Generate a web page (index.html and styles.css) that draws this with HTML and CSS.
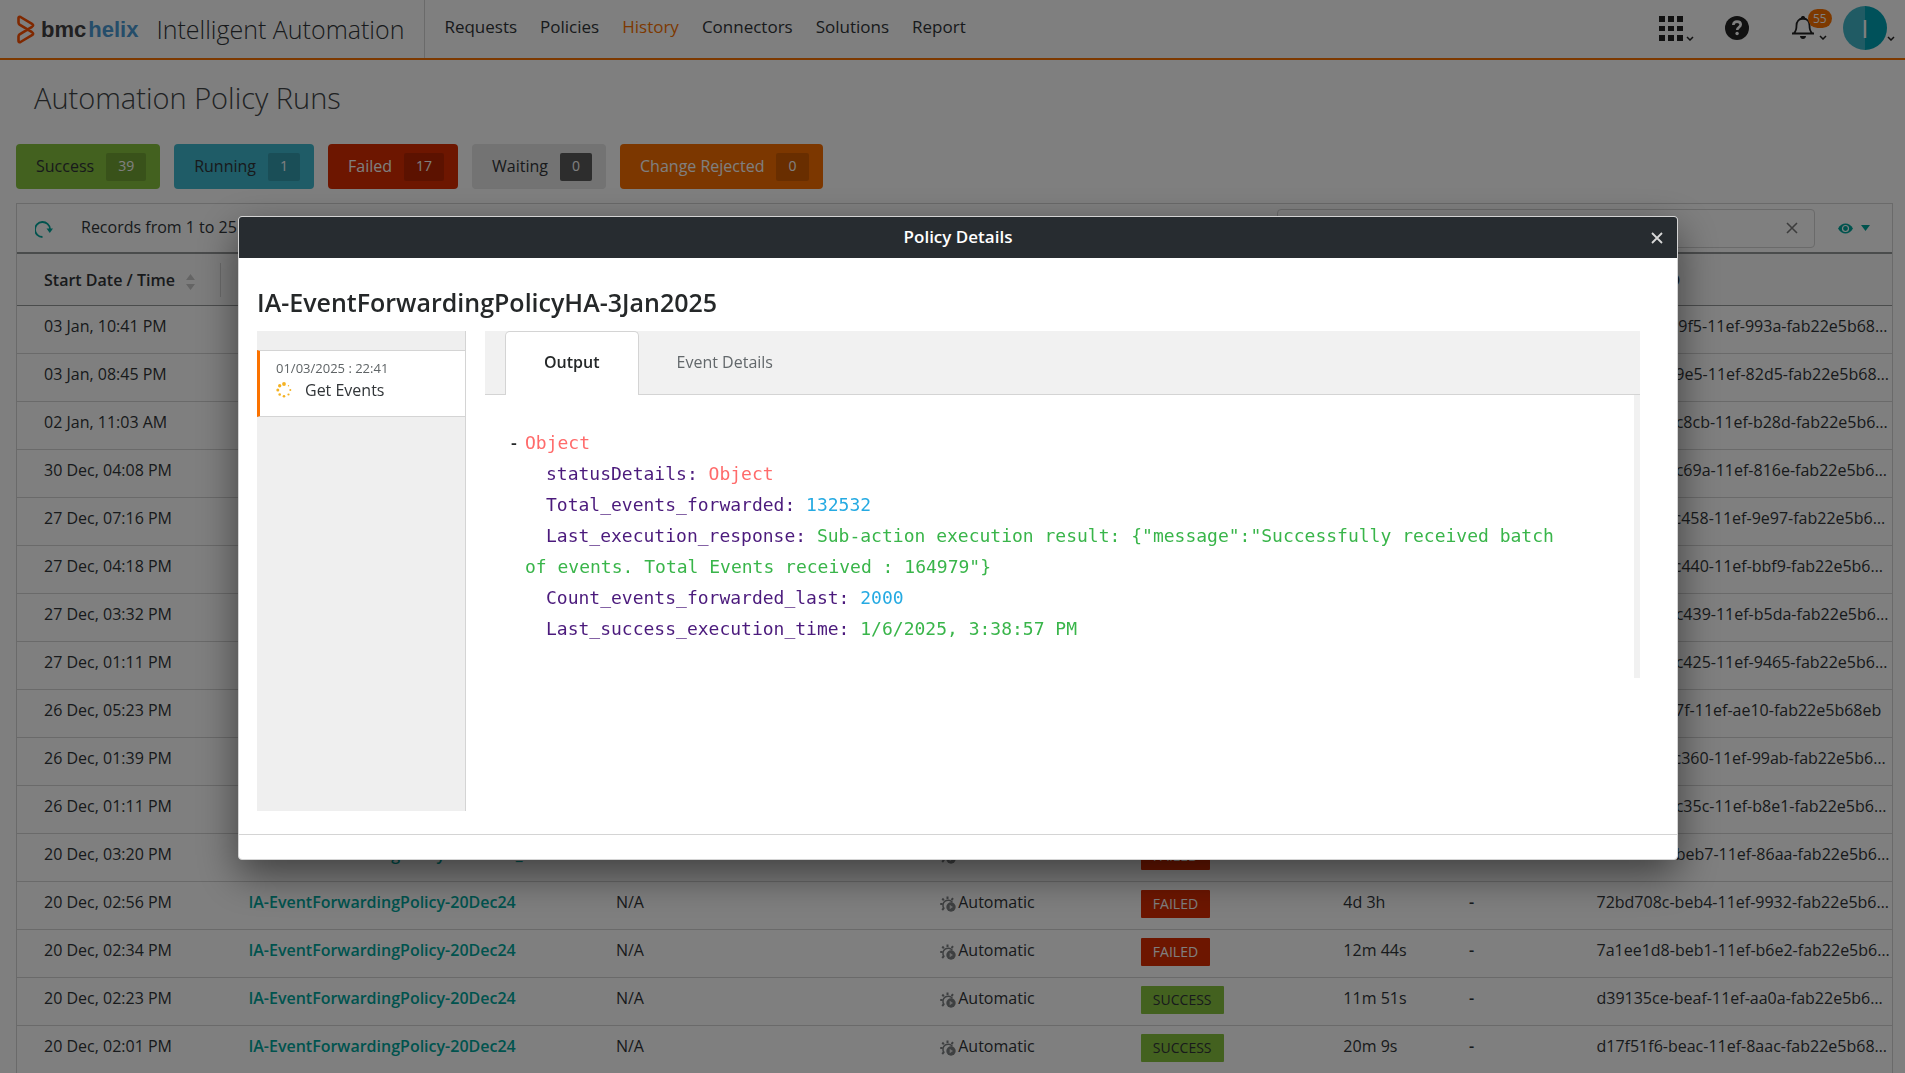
FILE: index.html
```html
<!DOCTYPE html>
<html lang="en">
<head>
    <meta charset="UTF-8">
    <meta name="viewport" content="width=device-width, initial-scale=1.0">
    <title>Intelligent Automation - Automation Policy Runs</title>
    <link rel="stylesheet" href="styles.css">
</head>
<body>
    <!-- Shared icons -->
    <svg class="icon-defs" aria-hidden="true">
        <symbol id="chevron" viewBox="0 0 8 5">
            <path d="M1 1l3 3 3-3" fill="none" stroke="currentColor" stroke-width="1.5"/>
        </symbol>
        <symbol id="gear" viewBox="0 0 16 16">
            <path d="M4 12.500A4.800 4.800 0 1 1 12.300 6.200" fill="none" stroke="currentColor" stroke-width="1.500"/>
            <path d="M7.500 3V0.500M11.500 4.200l1.500-2M3.800 4.300L2.300 2.500M2.700 8H0.200M4 11.800L2.200 14" stroke="currentColor" stroke-width="2"/>
            <circle cx="11" cy="11" r="4.700" fill="currentColor"/>
            <path d="M9.700 8.800l3.300 2.200-3.300 2.200z" fill="#ddd"/>
        </symbol>
    </svg>

    <!-- Top bar -->
    <header class="topbar">
        <a href="#" class="brand">
            <svg class="brand-mark" viewBox="0 0 18 29">
                <path d="M3.500 2L15 8.800Q17.300 10.200 15 11.800L2.600 19.400Q1.500 20.200 1.500 21.500V26Q1.700 27.800 3.500 27L15 20.200Q17.300 18.800 15 17.200L2.600 9.600Q1.500 8.800 1.500 7.500V3Q1.700 1.200 3.500 2z" fill="none" stroke="#fe5000" stroke-width="2.600" stroke-linejoin="round"/>
            </svg>
            <span class="brand-name">bmc<span class="brand-helix">helix</span></span>
        </a>
        <div class="app-name">Intelligent Automation</div>
        <nav class="main-nav">
            <a href="#">Requests</a>
            <a href="#">Policies</a>
            <a href="#" class="active">History</a>
            <a href="#">Connectors</a>
            <a href="#">Solutions</a>
            <a href="#">Report</a>
        </nav>
        <div class="tools">
            <button class="tool" aria-label="Applications">
                <svg width="24" height="25" viewBox="0 0 24 25"><path d="M0 0h6v6H0zM9 0h6v6H9zM18 0h6v6h-6zM0 10h6v5H0zM9 10h6v5H9zM18 10h6v5h-6zM0 19h6v6H0zM9 19h6v6H9zM18 19h6v6h-6z"/></svg>
                <svg class="chevron"><use href="#chevron"/></svg>
            </button>
            <button class="tool" aria-label="Help">
                <svg width="24" height="24" viewBox="0 0 24 24">
                    <circle cx="12" cy="12" r="12"/>
                    <path d="M8.300 9c.2-2.300 1.600-3.400 3.700-3.400s3.700 1.200 3.700 3c0 2.600-3.500 2.700-3.500 5.400" fill="none" stroke="#fff" stroke-width="2.600"/>
                    <circle cx="12.100" cy="17.500" r="1.700" fill="#fff"/>
                </svg>
            </button>
            <button class="tool" aria-label="Notifications">
                <svg width="24" height="24" viewBox="0 0 24 24">
                    <path d="M1 17.500h22M3 17c2.200-1.800 2.500-4 2.500-7.500 0-4 2.500-7 6.500-7s6.500 3 6.500 7c0 3.500.3 5.700 2.500 7.500" fill="none" stroke="#222" stroke-width="1.800"/>
                    <path d="M10 1.500c0-2 4-2 4 0l.5 2h-5zM9 20h6c0 4-6 4-6 0z"/>
                </svg>
                <span class="count">55</span>
                <svg class="chevron"><use href="#chevron"/></svg>
            </button>
            <button class="tool tool-user" aria-label="Account">
                <span class="avatar">I</span>
                <svg class="chevron"><use href="#chevron"/></svg>
            </button>
        </div>
    </header>

    <!-- Policy runs -->
    <main class="page">
        <h1>Automation Policy Runs</h1>
        <div class="filters">
            <button class="filter success">Success <span>39</span></button>
            <button class="filter running">Running <span>1</span></button>
            <button class="filter failed">Failed <span>17</span></button>
            <button class="filter waiting">Waiting <span>0</span></button>
            <button class="filter rejected">Change Rejected <span>0</span></button>
        </div>

        <div class="grid">
            <div class="toolbar">
                <button class="refresh" aria-label="Refresh">
                    <svg width="18" height="19" viewBox="0 0 18 19">
                        <path d="M7.500 18A7.500 7.500 0 1 1 15 10" fill="none" stroke="currentColor" stroke-width="1.800"/>
                        <path d="M11.500 9.500h6.500L14.800 14z" fill="currentColor"/>
                    </svg>
                </button>
                <span class="records">Records from 1 to 25</span>
                <div class="search">
                    <input type="text" aria-label="Search">
                    <button aria-label="Clear search">
                        <svg width="12" height="12" viewBox="0 0 12 12"><path d="M1 1l10 10M11 1L1 11" stroke="currentColor" stroke-width="1.600"/></svg>
                    </button>
                </div>
                <button class="columns" aria-label="Visible columns">
                    <svg width="15" height="11" viewBox="0 0 15 11">
                        <path d="M0 5.500C2 2 4.500.5 7.500.5S13 2 15 5.500c-2 3.500-4.500 5-7.500 5S2 9 0 5.500z" fill="currentColor"/>
                        <circle cx="7.500" cy="5.500" r="3" fill="none" stroke="#fff" stroke-width="1.200"/>
                    </svg>
                    <svg width="9" height="6" viewBox="0 0 9 6"><path d="M0 0h9L4.500 6z" fill="currentColor"/></svg>
                </button>
            </div>

            <table>
                <colgroup>
                    <col class="col-date"><col class="col-name"><col class="col-request"><col class="col-trigger">
                    <col class="col-status"><col class="col-time"><col class="col-change"><col class="col-id">
                </colgroup>
                <thead>
                    <tr>
                        <th>Start Date / Time
                            <svg class="sort" viewBox="0 0 9 16"><path d="M0 6h9L4.500 0zM0 10h9l-4.500 6z" fill="currentColor"/></svg>
                        </th>
                        <th>Policy Name</th><th>Request</th><th>Trigger</th><th>Status</th><th>Duration</th><th>Change</th><th>Request ID</th>
                    </tr>
                </thead>
                <tbody>
                    <tr><td>03 Jan, 10:41 PM</td><td><a href="#">IA-EventForwardingPolicyHA-3Jan2025</a></td><td>N/A</td><td><svg class="gear"><use href="#gear"/></svg>Automatic</td><td><span class="tag running">RUNNING</span></td><td>2d 16h</td><td>-</td><td>4e71f6a2-c9f5-11ef-993a-fab22e5b68eb</td></tr>
                    <tr><td>03 Jan, 08:45 PM</td><td><a href="#">IA-EventForwardingPolicyHA-3Jan2025</a></td><td>N/A</td><td><svg class="gear"><use href="#gear"/></svg>Automatic</td><td><span class="tag failed">FAILED</span></td><td>1h 12m</td><td>-</td><td>0f2ab5f8-c9e5-11ef-82d5-fab22e5b68eb</td></tr>
                    <tr><td>02 Jan, 11:03 AM</td><td><a href="#">IA-EventForwardingPolicyHA</a></td><td>N/A</td><td><svg class="gear"><use href="#gear"/></svg>Automatic</td><td><span class="tag failed">FAILED</span></td><td>20m 4s</td><td>-</td><td>8a0ed4b6-c8cb-11ef-b28d-fab22e5b68eb</td></tr>
                    <tr><td>30 Dec, 04:08 PM</td><td><a href="#">IA-EventForwardingPolicyHA</a></td><td>N/A</td><td><svg class="gear"><use href="#gear"/></svg>Automatic</td><td><span class="tag success">SUCCESS</span></td><td>14m 8s</td><td>-</td><td>9b3de8a4-c69a-11ef-816e-fab22e5b68eb</td></tr>
                    <tr><td>27 Dec, 07:16 PM</td><td><a href="#">IA-EventForwardingPolicyHA</a></td><td>N/A</td><td><svg class="gear"><use href="#gear"/></svg>Automatic</td><td><span class="tag success">SUCCESS</span></td><td>10m 2s</td><td>-</td><td>75dca21e-c458-11ef-9e97-fab22e5b68eb</td></tr>
                    <tr><td>27 Dec, 04:18 PM</td><td><a href="#">IA-EventForwardingPolicyHA</a></td><td>N/A</td><td><svg class="gear"><use href="#gear"/></svg>Automatic</td><td><span class="tag success">SUCCESS</span></td><td>11m 9s</td><td>-</td><td>a27c80d4-c440-11ef-bbf9-fab22e5b68eb</td></tr>
                    <tr><td>27 Dec, 03:32 PM</td><td><a href="#">IA-EventForwardingPolicyHA</a></td><td>N/A</td><td><svg class="gear"><use href="#gear"/></svg>Automatic</td><td><span class="tag failed">FAILED</span></td><td>12m 6s</td><td>-</td><td>3b9d0ae6-c439-11ef-b5da-fab22e5b68eb</td></tr>
                    <tr><td>27 Dec, 01:11 PM</td><td><a href="#">IA-EventForwardingPolicyHA</a></td><td>N/A</td><td><svg class="gear"><use href="#gear"/></svg>Automatic</td><td><span class="tag failed">FAILED</span></td><td>12m 6s</td><td>-</td><td>8d60ea2b-c425-11ef-9465-fab22e5b68eb</td></tr>
                    <tr><td>26 Dec, 05:23 PM</td><td><a href="#">IA-EventForwardingPolicyHA</a></td><td>N/A</td><td><svg class="gear"><use href="#gear"/></svg>Automatic</td><td><span class="tag success">SUCCESS</span></td><td>19m 1s</td><td>-</td><td>f1f7c1ff-c37f-11ef-ae10-fab22e5b68eb</td></tr>
                    <tr><td>26 Dec, 01:39 PM</td><td><a href="#">IA-EventForwardingPolicyHA</a></td><td>N/A</td><td><svg class="gear"><use href="#gear"/></svg>Automatic</td><td><span class="tag failed">FAILED</span></td><td>13m 5s</td><td>-</td><td>47ea1cd8-c360-11ef-99ab-fab22e5b68eb</td></tr>
                    <tr><td>26 Dec, 01:11 PM</td><td><a href="#">IA-EventForwardingPolicyHA</a></td><td>N/A</td><td><svg class="gear"><use href="#gear"/></svg>Automatic</td><td><span class="tag failed">FAILED</span></td><td>12m 6s</td><td>-</td><td>6a08d3be-c35c-11ef-b8e1-fab22e5b68eb</td></tr>
                    <tr><td>20 Dec, 03:20 PM</td><td><a href="#">IA-EventForwardingPolicy-20Dec24_1</a></td><td>N/A</td><td><svg class="gear"><use href="#gear"/></svg>Automatic</td><td><span class="tag failed">FAILED</span></td><td>4d 2h</td><td>-</td><td>d5a08e1b-beb7-11ef-86aa-fab22e5b68eb</td></tr>
                    <tr><td>20 Dec, 02:56 PM</td><td><a href="#">IA-EventForwardingPolicy-20Dec24</a></td><td>N/A</td><td><svg class="gear"><use href="#gear"/></svg>Automatic</td><td><span class="tag failed">FAILED</span></td><td>4d 3h</td><td>-</td><td>72bd708c-beb4-11ef-9932-fab22e5b68eb</td></tr>
                    <tr><td>20 Dec, 02:34 PM</td><td><a href="#">IA-EventForwardingPolicy-20Dec24</a></td><td>N/A</td><td><svg class="gear"><use href="#gear"/></svg>Automatic</td><td><span class="tag failed">FAILED</span></td><td>12m 44s</td><td>-</td><td>7a1ee1d8-beb1-11ef-b6e2-fab22e5b68eb</td></tr>
                    <tr><td>20 Dec, 02:23 PM</td><td><a href="#">IA-EventForwardingPolicy-20Dec24</a></td><td>N/A</td><td><svg class="gear"><use href="#gear"/></svg>Automatic</td><td><span class="tag success">SUCCESS</span></td><td>11m 51s</td><td>-</td><td>d39135ce-beaf-11ef-aa0a-fab22e5b68eb</td></tr>
                    <tr><td>20 Dec, 02:01 PM</td><td><a href="#">IA-EventForwardingPolicy-20Dec24</a></td><td>N/A</td><td><svg class="gear"><use href="#gear"/></svg>Automatic</td><td><span class="tag success">SUCCESS</span></td><td>20m 9s</td><td>-</td><td>d17f51f6-beac-11ef-8aac-fab22e5b68eb</td></tr>
                </tbody>
            </table>
        </div>
    </main>

    <!-- Policy details dialog -->
    <div class="backdrop">
        <div class="modal" role="dialog" aria-labelledby="modal-title">
            <div class="modal-header">
                <h2 id="modal-title">Policy Details</h2>
                <button class="close" aria-label="Close">
                    <svg width="12" height="12" viewBox="0 0 12 12"><path d="M1 1l10 10M11 1L1 11" stroke="currentColor" stroke-width="1.800"/></svg>
                </button>
            </div>
            <div class="modal-body">
                <h3>IA-EventForwardingPolicyHA-3Jan2025</h3>
                <div class="details">
                    <aside class="steps">
                        <a href="#" class="step">
                            <span class="step-time">01/03/2025 : 22:41</span>
                            <span class="step-name">
                                <svg width="16" height="16" viewBox="0 0 16 16" fill="#f4b223">
                                    <circle cx="8" cy="2" r="1.900"/><circle cx="3.700" cy="3.700" r="1.700"/>
                                    <circle cx="1.800" cy="8" r="1.500"/><circle cx="3.700" cy="12.500" r="1.300"/>
                                    <circle cx="8" cy="14.300" r="1.300"/><circle cx="12.500" cy="12.500" r="1.100"/>
                                    <circle cx="14.300" cy="8" r="1"/><circle cx="12.500" cy="3.700" r=".7"/>
                                </svg>
                                Get Events
                            </span>
                        </a>
                    </aside>
                    <section class="result">
                        <div class="tabs" role="tablist">
                            <button class="tab active" role="tab" aria-selected="true">Output</button>
                            <button class="tab" role="tab" aria-selected="false">Event Details</button>
                        </div>
                        <div class="output">
                            <div class="root"><button class="toggle" aria-label="Collapse">-</button><span class="type">Object</span></div>
                            <div class="entry">statusDetails: <span class="type">Object</span></div>
                            <div class="entry">Total_events_forwarded: <span class="number">132532</span></div>
                            <div class="entry">Last_execution_response: <span class="string">Sub-action execution result: {"message":"Successfully received batch of events. Total Events received : 164979"}</span></div>
                            <div class="entry">Count_events_forwarded_last: <span class="number">2000</span></div>
                            <div class="entry">Last_success_execution_time: <span class="string">1/6/2025, 3:38:57 PM</span></div>
                        </div>
                    </section>
                </div>
            </div>
            <div class="modal-footer"></div>
        </div>
    </div>
</body>
</html>
```
FILE: styles.css
```css
* {
    box-sizing: border-box;
}

body {
    margin: 0;
    height: 100vh;
    overflow: hidden;
    font-family: "Open Sans", sans-serif;
    font-size: 16px;
    line-height: 21px;
    color: #313538;
    background: #fff;
}

button {
    font: inherit;
    color: inherit;
    background: none;
    border: none;
    padding: 0;
    cursor: pointer;
}

a {
    color: inherit;
    text-decoration: none;
}

.icon-defs {
    display: none;
}

/* Top bar */
.topbar {
    display: flex;
    align-items: center;
    height: 60px;
    padding: 0 10px 0 17px;
    border-bottom: 2px solid #fb7200;
}

.brand {
    display: flex;
    align-items: center;
    gap: 6px;
}

.brand-mark {
    width: 18px;
    height: 29px;
}

.brand-name {
    display: flex;
    gap: 2px;
    font-family: "Liberation Sans", sans-serif;
    font-size: 22px;
    font-weight: bold;
    color: #414042;
}

.brand-helix {
    color: #4a9bd4;
}

.app-name {
    display: flex;
    align-items: center;
    height: 58px;
    padding: 0 20px 0 18px;
    font-size: 25px;
    font-weight: 300;
    border-right: 1px solid #d4d4d4;
}

.main-nav {
    display: flex;
    gap: 23px;
    margin-left: 19px;
    padding-bottom: 6px;
    font-size: 17px;
}

.main-nav .active {
    color: #fb7200;
}

.tools {
    display: flex;
    align-items: center;
    margin-left: auto;
    padding-bottom: 2px;
    color: #222;
}

.tool {
    position: relative;
    display: flex;
    align-items: flex-end;
    gap: 3px;
    margin-right: 31px;
    fill: #222;
}

.tool:nth-child(2) {
    margin-right: 42px;
}

.tool:nth-child(3) {
    gap: 4px;
    margin-right: 16px;
}

.tool-user {
    gap: 0;
    margin: 0;
}

.chevron {
    width: 8px;
    height: 5px;
}

.tool-user .chevron {
    margin-bottom: 9px;
}

.count {
    position: absolute;
    top: -7px;
    left: 17px;
    padding: 0 5px;
    border-radius: 10px;
    background: #fb7200;
    color: #fff;
    font-size: 12px;
    line-height: 19px;
}

.avatar {
    width: 44px;
    height: 44px;
    border-radius: 50%;
    background: linear-gradient(to right, #41b6c8 50%, #00a3b4 50%);
    color: #fff;
    font-size: 26px;
    line-height: 44px;
}

/* Page */
.page {
    padding: 0 12px 0 16px;
}

h1 {
    margin: 18px 18px 26px;
    font-size: 29px;
    font-weight: 300;
    line-height: 40px;
    color: #414547;
}

.filters {
    display: flex;
    gap: 14px;
    margin-bottom: 14px;
}

.filter {
    display: flex;
    align-items: center;
    gap: 12px;
    height: 45px;
    padding: 0 14px 0 20px;
    border-radius: 4px;
}

.filter span {
    padding: 0 12px 2px;
    border-radius: 2px;
    background: rgba(0, 0, 0, 0.15);
    color: #fff;
    font-size: 14px;
    line-height: 26px;
}

.success {
    background: #86c23e;
}

.running {
    background: #3fb8ce;
}

.failed {
    background: #da2c00;
    color: #fff;
}

.waiting {
    background: #e6e6e6;
}

.filter.waiting span {
    background: #5b5b5b;
}

.rejected {
    background: #f86e00;
    color: #fff;
}

/* Runs table */
.grid {
    border: 1px solid #d4d4d4;
}

.toolbar {
    display: flex;
    align-items: center;
    height: 50px;
    padding: 0 22px 0 18px;
    border-bottom: 2px solid #959899;
}

.refresh,
.columns {
    display: flex;
    align-items: center;
    gap: 8px;
    color: #00a79d;
}

.records {
    margin-left: 28px;
    padding-bottom: 2px;
}

.search {
    display: flex;
    align-items: center;
    flex: 0 0 538px;
    height: 39px;
    margin: 0 23px 0 auto;
    padding-right: 16px;
    border: 1px solid #d4d4d4;
    border-radius: 4px;
    color: #7a7a7a;
}

.search input {
    flex: 1;
    padding: 0 12px;
    font: inherit;
    background: none;
    border: none;
}

table {
    width: 100%;
    table-layout: fixed;
    border-collapse: collapse;
}

.col-date { width: 10.9%; }
.col-name { width: 19.6%; }
.col-request { width: 17.3%; }
.col-trigger { width: 10.7%; }
.col-status { width: 10.8%; }
.col-time { width: 6.7%; }
.col-change { width: 6.8%; }

th {
    padding: 16px 0 14px 27px;
    text-align: left;
    font-weight: 600;
    background: #fbfbfb;
    border-bottom: 1px solid #959899;
}

th:first-child {
    background: linear-gradient(#d4d4d4, #d4d4d4) right center / 1px 34px no-repeat #fbfbfb;
}

.sort {
    width: 9px;
    height: 16px;
    margin-left: 7px;
    vertical-align: middle;
    color: #c8c8c8;
}

td {
    height: 48px;
    padding: 10px 2px 0 27px;
    vertical-align: top;
    white-space: nowrap;
    overflow: hidden;
    text-overflow: ellipsis;
    border-bottom: 1px solid #d4d4d4;
}

td:nth-child(5) {
    padding-top: 8px;
}

td:nth-child(7) {
    font-weight: 600;
}

td a {
    color: #00a79d;
    font-weight: 600;
}

.gear {
    width: 16px;
    height: 16px;
    margin-right: 2px;
    vertical-align: middle;
    color: #7d8083;
}

.tag {
    display: inline-block;
    padding: 0 12px;
    border-radius: 1px;
    font-size: 14px;
    line-height: 28px;
    vertical-align: top;
}

.tag.failed {
    font-weight: 500;
}

/* Policy details dialog */
.backdrop {
    position: fixed;
    inset: 0;
    display: flex;
    align-items: flex-start;
    padding: 216px 227px 0 238px;
    background: rgba(0, 0, 0, 0.5);
}

.modal {
    flex: 1;
    background: #fff;
    border: 1px solid #d4d4d4;
    border-radius: 4px;
    box-shadow: 0 15px 40px rgba(0, 0, 0, 0.5);
}

.modal-header {
    display: flex;
    align-items: center;
    height: 41px;
    padding: 0 14px 0 26px;
    border-radius: 3px 3px 0 0;
    background: #272c30;
    color: #fff;
}

.modal-header h2 {
    flex: 1;
    margin: 0;
    padding-bottom: 2px;
    text-align: center;
    font-size: 17px;
    font-weight: 600;
}

.close {
    display: flex;
    color: #d8d8d8;
}

.modal-body {
    padding: 28px 37px 23px 18px;
}

.modal-body h3 {
    margin: 0 0 13px;
    font-size: 25px;
    font-weight: 600;
    line-height: 32px;
    color: #252829;
}

.details {
    display: flex;
    gap: 19px;
}

.steps {
    flex: 0 0 209px;
    min-height: 480px;
    padding-top: 19px;
    background: #efefef;
    border-right: 1px solid #d4d4d4;
}

.step {
    display: block;
    padding: 7px 0 15px 16px;
    background: #fff;
    border-top: 1px solid #d4d4d4;
    border-bottom: 1px solid #d4d4d4;
    border-left: 3px solid #fb7200;
}

.step-time {
    display: block;
    font-size: 13px;
    color: #5f6466;
}

.step-name {
    display: flex;
    align-items: center;
    gap: 13px;
    font-weight: 500;
    line-height: 22px;
}

.result {
    flex: 1;
}

.tabs {
    display: flex;
    height: 64px;
    padding-left: 20px;
    background: #f1f1f1;
    border-bottom: 1px solid #d4d4d4;
}

.tab {
    height: 64px;
    padding: 0 38px 2px;
    color: #63686b;
}

.tab.active {
    background: #fff;
    border: 1px solid #d4d4d4;
    border-bottom: none;
    border-radius: 5px 5px 0 0;
    color: #252829;
    font-weight: 600;
}

.output {
    min-height: 283px;
    padding: 32px 60px 0 40px;
    border-right: 6px solid #f1f1f1;
    font-family: "DejaVu Sans Mono", monospace;
    font-size: 18px;
    line-height: 31px;
    color: #4b1a7c;
}

.root {
    display: flex;
    margin-left: -14px;
}

.toggle {
    width: 14px;
    text-align: left;
    color: #252829;
    font-family: "Open Sans", sans-serif;
    font-weight: 600;
}

.entry {
    text-indent: 21px;
}

.type {
    color: #ff6b6b;
}

.number {
    color: #25aae2;
}

.string {
    color: #39b54a;
}

.modal-footer {
    height: 25px;
    border-top: 1px solid #d4d4d4;
}
```
